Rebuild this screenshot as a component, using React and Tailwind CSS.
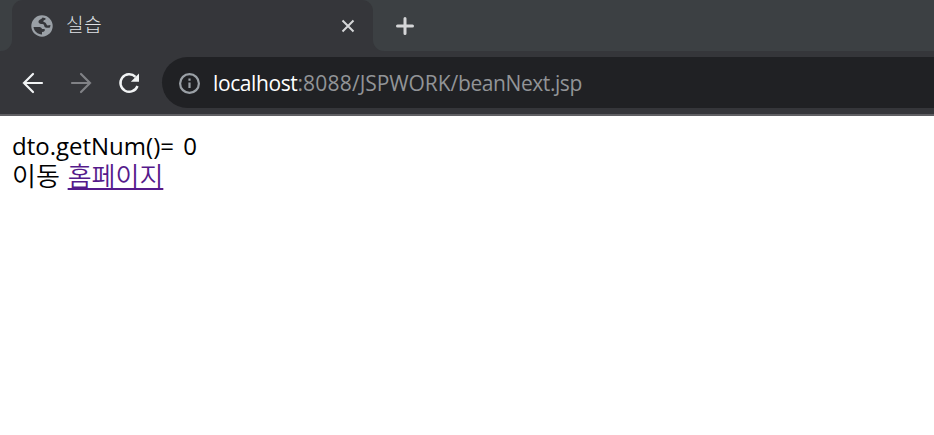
export default function App() {
  return (
    <div className="flex h-[435px] w-[934px] flex-col overflow-hidden bg-white">
      <header className="bg-[#35363a]">
        <div className="flex h-[51px]">
          <div className="w-3 rounded-br-[11px] bg-[#3c4043]" />
          <div className="h-full w-[361px] bg-[#3c4043]">
            <div className="flex h-full items-center rounded-t-[11px] bg-[#35363a]">
              <svg className="ml-[18px] h-6 w-6 shrink-0" viewBox="0 0 24 24">
                <circle cx="12" cy="12" r="10.700" fill="#9aa0a6" />
                <path d="M12.500 3.500C11.500 5.500 8.500 5.500 8.500 7.800 8.500 9.800 10.500 10 12.300 10 14 10 14 11 14.300 12.200 14.800 13.800 17.500 14 20 13.500L20.500 11 17.500 11.500C16.500 11.500 16.500 8.800 14.500 8.300 12.500 7.800 13 6.500 15.500 5.500V4.200z" fill="#35363a" />
                <path d="M3.500 13H8.500C10.500 13 11.500 13.500 12 15H14.500C15.500 16.500 14.500 18 12 18V20.400C8 20.500 4 17.500 3.500 13z" fill="#35363a" />
              </svg>
              <span className="relative -top-0.5 ml-3 w-[264px] whitespace-nowrap font-['Noto_Sans_CJK_KR',sans-serif] text-[19px] font-light leading-6 tracking-[0.700px] text-[#dfe1e5]">실습</span>
              <svg className="ml-[6px] h-6 w-6 shrink-0" viewBox="0 0 24 24" stroke="#d5d6d8" strokeWidth="2">
                <path d="M6.500 6.500l11 11M17.500 6.500l-11 11" />
              </svg>
            </div>
          </div>
          <div className="flex flex-1 items-center rounded-bl-[11px] bg-[#3c4043] pl-[20px]">
            <svg className="h-6 w-6" viewBox="0 0 24 24" stroke="#d5d6d8" strokeWidth="3" strokeLinecap="round">
              <path d="M12 4.500v15M4.500 12h15" />
            </svg>
          </div>
        </div>
        <div className="flex h-[63px] items-center">
          <svg className="ml-[18px] h-[30px] w-[30px]" viewBox="0 0 30 30" fill="none" stroke="#f1f3f4" strokeWidth="2.200" strokeLinecap="round">
            <path d="M24 15H6M15 6L6 15l9 9" />
          </svg>
          <svg className="ml-[18px] h-[30px] w-[30px]" viewBox="0 0 30 30" fill="none" stroke="#818286" strokeWidth="2.200" strokeLinecap="round">
            <path d="M6 15h18M15 6L24 15l-9 9" />
          </svg>
          <svg className="ml-[18px] h-[30px] w-[30px]" viewBox="0 0 30 30" fill="none" stroke="#f1f3f4" strokeWidth="2.400">
            <path d="M23.500 18A8.800 8.800 0 1 1 21.500 8.800" />
            <path d="M25 5.500v8.200h-8.200z" fill="#f1f3f4" stroke="none" />
          </svg>
          <div className="ml-[18px] flex h-[51px] flex-1 items-center rounded-l-full bg-[#202124]">
            <svg className="ml-[15px] h-6 w-6 shrink-0" viewBox="0 0 24 24" fill="none" stroke="#9aa0a6" strokeWidth="2.200">
              <circle cx="12.500" cy="12.500" r="9.400" />
              <path d="M12.500 11.500v5.500M12.500 7.500v2.200" />
            </svg>
            <div className="ml-3 whitespace-nowrap font-['Open_Sans',sans-serif] text-[21px] leading-6 text-[#929497]">
              <span className="font-[450] tracking-[-0.400px] text-white">localhost</span>
              <span className="tracking-[0.200px]">:8088/</span>
              <span className="tracking-[-0.100px]">JSPWORK/</span>
              <span className="tracking-[-0.430px]">beanNext.jsp</span>
            </div>
          </div>
        </div>
        <div className="h-[2px] bg-[#5f5f63]" />
      </header>
      <main className="px-3 pt-[15px] font-['Open_Sans','Noto_Sans_CJK_KR',sans-serif] text-[24px] text-black">
        <p className="whitespace-nowrap leading-[30px] [word-spacing:3px]">dto.getNum()= 0</p>
        <p className="-mt-px whitespace-nowrap font-['Noto_Sans_CJK_KR',sans-serif] text-[26px] font-[350] leading-[30px] [word-spacing:2px]">이동 <a href="#" className="text-[#551a8b] underline decoration-2 underline-offset-[2px]">홈페이지</a></p>
      </main>
    </div>
  );
}
